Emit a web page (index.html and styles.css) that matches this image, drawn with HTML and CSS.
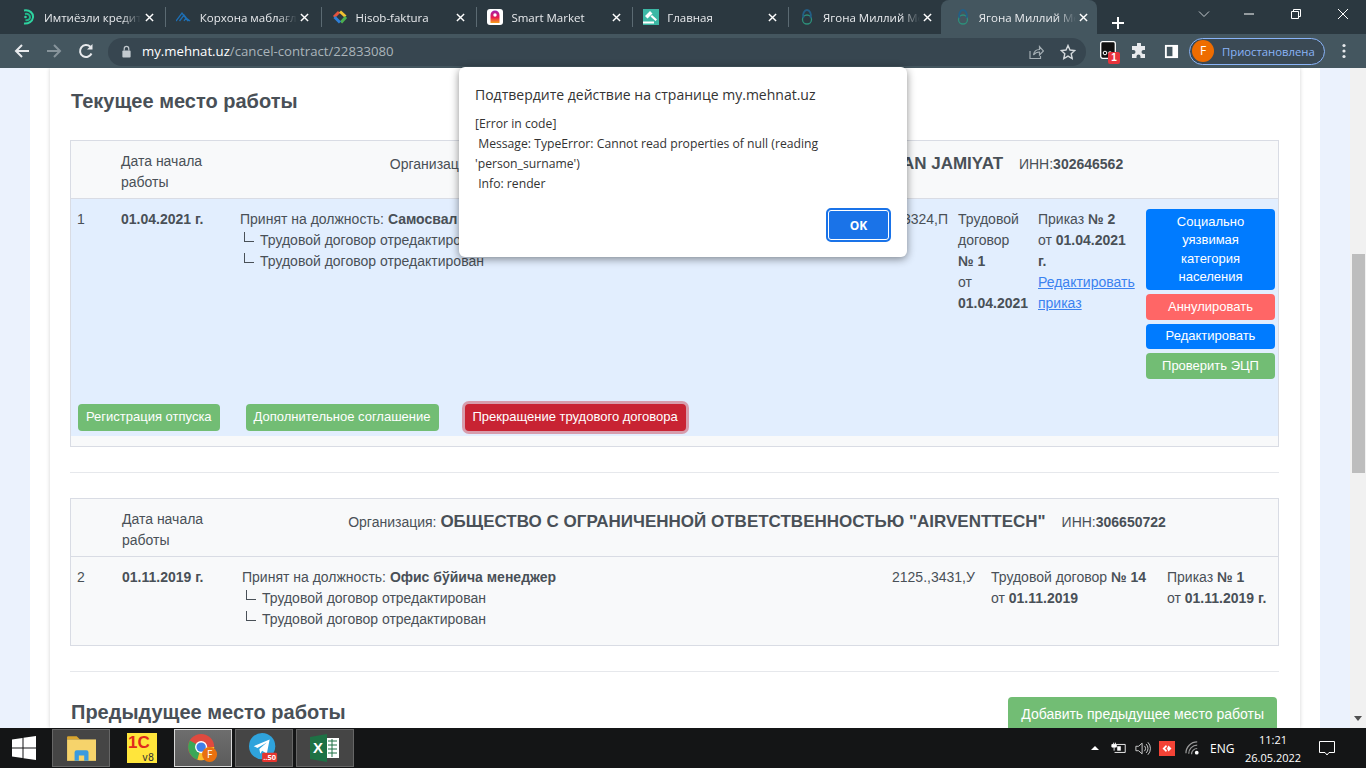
FILE: index.html
```html
<!DOCTYPE html>
<html lang="ru">
<head>
    <meta charset="UTF-8">
    <title>Ягона Миллий Меҳнат Портали</title>
    <link rel="stylesheet" href="styles.css">
</head>
<body>
    <svg class="icon-defs" width="0" height="0">
        <symbol id="tab-x" viewBox="0 0 10 10"><path d="M1 1l8 8M9 1 1 9" stroke="#fff" stroke-width="1.600"/></symbol>
        <symbol id="tab-logo" viewBox="0 0 16 16"><circle cx="8" cy="10.500" r="4.500" fill="none" stroke="#2d8f7a" stroke-width="1.300"/><path d="M4.500 9C3 5 5.500 1 8 1s5 4 3.500 8" fill="none" stroke="#235f86" stroke-width="1.800"/></symbol>
    </svg>

    <header class="tabstrip">
        <div class="tab">
            <svg class="favicon" viewBox="0 0 16 16"><path d="M4 1.500c6-1 9.500 3 9 7-.5 4-4.500 6.500-9 6" fill="none" stroke="#2fd3a0" stroke-width="2"/><path d="M5 5c3-.8 5 1 5 3.200S8 11.500 5.500 11" fill="none" stroke="#1fb88a" stroke-width="2"/><circle cx="5.500" cy="8" r="1.300" fill="#2fd3a0"/></svg>
            <span class="tab-label">Имтиёзли кредит</span><svg class="tab-close"><use href="#tab-x"/></svg>
        </div>
        <div class="tab">
            <svg class="favicon" viewBox="0 0 16 16"><path d="M0 12 6 4l6 8M3.500 12 8 6l4.500 6M8 12l2-3 4 3" fill="none" stroke="#1d6fb5" stroke-width="1.300"/></svg>
            <span class="tab-label">Корхона маблағлари</span><svg class="tab-close"><use href="#tab-x"/></svg>
        </div>
        <div class="tab">
            <svg class="favicon" viewBox="0 0 16 16"><path d="M2 8l5-5" stroke="#e5533d" stroke-width="3"/><path d="M8 2.500l5.500 5" stroke="#f2c230" stroke-width="3"/><path d="M14 8l-5 5.500" stroke="#4caf50" stroke-width="3"/><path d="M8 13.500 2.500 8" stroke="#2f7fd6" stroke-width="3"/><path d="M8 5.500 10.500 8 8 10.500 5.500 8z" fill="#2b3840"/></svg>
            <span class="tab-label">Hisob-faktura</span><svg class="tab-close"><use href="#tab-x"/></svg>
        </div>
        <div class="tab">
            <svg class="favicon" viewBox="0 0 16 16"><defs><linearGradient id="bag" x1="0" y1="0" x2="0" y2="1"><stop offset="0" stop-color="#a31fb0"/><stop offset=".55" stop-color="#e8194f"/><stop offset="1" stop-color="#f7a11a"/></linearGradient></defs><rect width="16" height="16" rx="3" fill="#fff"/><path d="M3.500 14V6a4.500 4.500 0 0 1 9 0v8z" fill="url(#bag)"/><circle cx="8" cy="6" r="1.700" fill="#fff"/></svg>
            <span class="tab-label">Smart Market</span><svg class="tab-close"><use href="#tab-x"/></svg>
        </div>
        <div class="tab">
            <svg class="favicon" viewBox="0 0 16 16"><rect width="16" height="16" fill="#3cb8a5"/><path d="M2 7l5-5 2.500 2.500-5 5zM7.500 7.500l1.500-1.500 5 4.500-1.500 1.500z" fill="#fff"/><rect x="0" y="12.500" width="11" height="2" fill="#fff"/></svg>
            <span class="tab-label">Главная</span><svg class="tab-close"><use href="#tab-x"/></svg>
        </div>
        <div class="tab">
            <svg class="favicon"><use href="#tab-logo"/></svg>
            <span class="tab-label">Ягона Миллий Меҳнат</span><svg class="tab-close"><use href="#tab-x"/></svg>
        </div>
        <div class="tab tab-active">
            <svg class="favicon"><use href="#tab-logo"/></svg>
            <span class="tab-label">Ягона Миллий Меҳнат</span><svg class="tab-close"><use href="#tab-x"/></svg>
        </div>
        <svg class="new-tab" viewBox="0 0 14 14"><path d="M7 1v12M1 7h12" stroke="#fff" stroke-width="2"/></svg>
        <div class="window-controls">
            <svg class="ctl-chevron" viewBox="0 0 12 12"><path d="M1 3.500 6 8.500l5-5" fill="none" stroke="#c4cace"/></svg>
            <svg viewBox="0 0 12 12"><path d="M1 6h10" stroke="#fff"/></svg>
            <svg viewBox="0 0 12 12"><path d="M1.500 3.500h7v7h-7zM3.500 3.500v-2h7v7h-2" fill="none" stroke="#fff"/></svg>
            <svg viewBox="0 0 12 12"><path d="M1 1l10 10M11 1 1 11" stroke="#fff"/></svg>
        </div>
    </header>

    <nav class="toolbar">
        <svg class="tool tool-back" viewBox="0 0 16 16"><path d="M15 8H2M8 2 2 8l6 6" fill="none" stroke="#e8eaed" stroke-width="2"/></svg>
        <svg class="tool tool-forward" viewBox="0 0 16 16"><path d="M1 8h13M8 2l6 6-6 6" fill="none" stroke="#87949b" stroke-width="2"/></svg>
        <svg class="tool tool-reload" viewBox="0 0 16 16"><path d="M13.500 10.500A6 6 0 1 1 12.300 3.800" fill="none" stroke="#e8eaed" stroke-width="2"/><path d="M14.500 1v5.500H9z" fill="#e8eaed"/></svg>
        <div class="omnibox">
            <svg class="lock" viewBox="0 0 12 14"><path d="M3.500 6V4a2.500 2.500 0 0 1 5 0v2" fill="none" stroke="#c3cacf" stroke-width="1.300"/><rect x="1.500" y="6" width="9" height="7.500" rx="1" fill="#c3cacf"/></svg>
            <span class="url"><b>my.mehnat.uz</b>/cancel-contract/22833080</span>
            <svg class="omni-icon omni-share" viewBox="0 0 16 16"><path d="M2 7v7.500h10.500V12" fill="none" stroke="#a4aeb4" stroke-width="1.200"/><path d="M5.500 11c.5-3.500 3-5.500 6-5.500V2.500L15.500 7l-4 4V8c-2.500 0-4.500 1-6 3z" fill="none" stroke="#a4aeb4" stroke-width="1.200"/></svg>
            <svg class="omni-icon omni-star" viewBox="0 0 16 16"><path d="M8 1.500l2 4.500 4.800.5-3.600 3.200 1 4.800L8 12.100l-4.200 2.400 1-4.800L1.200 6.500 6 6z" fill="none" stroke="#d5dadd" stroke-width="1.400"/></svg>
        </div>
        <div class="ext-box">
            <svg class="ext-icon" viewBox="0 0 16 18"><rect x=".7" y=".7" width="14.600" height="16.600" rx="2" fill="#111" stroke="#fff" stroke-width="1.300"/><circle cx="5" cy="12" r="1.800" fill="none" stroke="#fff"/><circle cx="10" cy="12" r="1.800" fill="#fff"/></svg>
            <span class="ext-badge">1</span>
        </div>
        <svg class="tool-puzzle" viewBox="0 0 16 16"><path d="M6 1a2 2 0 0 1 4 0v2h4v4h-1.500a2 2 0 0 0 0 4H14v4H9.500v-1.500a2 2 0 0 0-4 0V15H1v-4h1.500a2 2 0 0 0 0-4H1V3h5z" fill="#e8eaed"/></svg>
        <svg class="tool-panel" viewBox="0 0 16 16"><rect x="1" y="1" width="14" height="14" fill="#fff"/><rect x="3" y="3" width="6" height="10" fill="#44565f"/></svg>
        <div class="profile">
            <span class="avatar">F</span>
            <span class="profile-text">Приостановлена</span>
        </div>
        <svg class="kebab" viewBox="0 0 4 16"><circle cx="2" cy="2.500" r="1.600" fill="#e8eaed"/><circle cx="2" cy="8" r="1.600" fill="#e8eaed"/><circle cx="2" cy="13.500" r="1.600" fill="#e8eaed"/></svg>
    </nav>

    <div class="viewport">
        <main class="page">
            <div class="page-inner">
                <section class="card">
                    <h2 class="section-title">Текущее место работы</h2>

                    <div class="job-box">
                        <div class="job-head">
                            <div class="head-date">Дата начала работы</div>
                            <div class="head-org">
                                Организация: <strong class="org-name org-name-hidden">MAS'ULIYATI CHEKLANGAN JAMIYAT</strong>
                                <span class="org-inn">ИНН:<b>302646562</b></span>
                            </div>
                        </div>
                        <div class="job-current">
                            <div class="job-row job-row-first">
                                <div>1</div>
                                <div><b>01.04.2021 г.</b></div>
                                <div>
                                    Принят на должность: <b>Самосвал</b>
                                    <div class="history"><i class="branch"></i>Трудовой договор отредактирован</div>
                                    <div class="history"><i class="branch"></i>Трудовой договор отредактирован</div>
                                </div>
                                <div class="job-code">3324,П</div>
                                <div class="job-contract">Трудовой договор <b>№&nbsp;1</b><br>от <b>01.04.2021</b></div>
                                <div class="job-order">
                                    Приказ <b>№ 2</b><br>от <b>01.04.2021 г.</b><br>
                                    <a href="#" class="edit-link">Редактировать приказ</a>
                                </div>
                                <div class="side-actions">
                                    <button class="btn btn-blue">Социально уязвимая категория населения</button>
                                    <button class="btn btn-coral">Аннулировать</button>
                                    <button class="btn btn-blue">Редактировать</button>
                                    <button class="btn btn-green">Проверить ЭЦП</button>
                                </div>
                            </div>
                            <div class="job-actions">
                                <button class="btn btn-green btn-wide">Регистрация отпуска</button>
                                <button class="btn btn-green btn-wide">Дополнительное соглашение</button>
                                <button class="btn btn-red btn-wide">Прекращение трудового договора</button>
                            </div>
                        </div>
                        <div class="job-foot"></div>
                    </div>

                    <hr class="divider">

                    <div class="job-box">
                        <div class="job-head job-head-second">
                            <div class="head-date">Дата начала работы</div>
                            <div class="head-org">
                                Организация: <strong class="org-name">ОБЩЕСТВО С ОГРАНИЧЕННОЙ ОТВЕТСТВЕННОСТЬЮ "AIRVENTTECH"</strong>
                                <span class="org-inn">ИНН:<b>306650722</b></span>
                            </div>
                        </div>
                        <div class="job-row job-row-second">
                            <div>2</div>
                            <div><b>01.11.2019 г.</b></div>
                            <div>
                                Принят на должность: <b>Офис бўйича менеджер</b>
                                <div class="history"><i class="branch"></i>Трудовой договор отредактирован</div>
                                <div class="history"><i class="branch"></i>Трудовой договор отредактирован</div>
                            </div>
                            <div>2125.,3431,У</div>
                            <div>Трудовой договор <b>№ 14</b><br>от <b>01.11.2019</b></div>
                            <div>Приказ <b>№ 1</b><br>от <b>01.11.2019 г.</b></div>
                        </div>
                    </div>

                    <hr class="divider">

                    <div class="prev-head">
                        <h2 class="section-title prev-title">Предыдущее место работы</h2>
                        <button class="btn btn-green btn-add">Добавить предыдущее место работы</button>
                    </div>
                </section>
            </div>
        </main>
        <div class="scrollbar">
            <div class="scroll-thumb"></div>
            <div class="scroll-arrow"></div>
        </div>
    </div>

    <footer class="taskbar">
        <svg class="win-logo" viewBox="0 0 24 24"><path d="M0 3.500 10.500 2v9.500H0zM11.500 1.800 24 0v11.500H11.500zM0 12.500h10.500V22L0 20.500zM11.500 12.500H24V24l-12.500-1.800z" fill="#fff"/></svg>
        <div class="task task-open">
            <svg viewBox="0 0 28 26"><path d="M1 3a1 1 0 0 1 1-1h8l3 3H1z" fill="#d9a52e"/><rect x="1" y="5" width="27" height="20" fill="#f6d36b"/><path d="M8 25v-8a2 2 0 0 1 2-2h9a2 2 0 0 1 2 2v8h-4v-5h-5v5z" fill="#3a9be0"/></svg>
        </div>
        <div class="task">
            <svg viewBox="0 0 30 30"><rect width="30" height="30" fill="#ffe53b"/><text x="1" y="15" class="onec-mark">1С</text><text x="15" y="28" class="onec-ver">v8</text></svg>
        </div>
        <div class="task task-active">
            <svg viewBox="0 0 32 32"><circle cx="14" cy="15" r="14" fill="#e04a3f"/><path d="M14 15 2 8a14 14 0 0 0 8 20.400z" fill="#3aa757"/><path d="M14 15l-4 13.400A14 14 0 0 0 28 15z" fill="#fbc02d"/><circle cx="14" cy="15" r="6.500" fill="#fff"/><circle cx="14" cy="15" r="5" fill="#3f7fe8"/><circle cx="23" cy="23" r="8" fill="#e9710f"/><text x="23" y="27" text-anchor="middle" class="chrome-f">F</text></svg>
        </div>
        <div class="task">
            <svg viewBox="0 0 32 32"><circle cx="14" cy="14" r="14" fill="#2fa3dc"/><path d="M5 14 22 7l-3 15-5-3-2 3-1-5 8-7-10 6z" fill="#fff"/><rect x="14" y="21" width="16" height="10" rx="1.500" fill="#e5352f"/><text x="22" y="29" text-anchor="middle" class="tg-count">..50</text></svg>
        </div>
        <div class="task">
            <svg viewBox="0 0 30 28"><rect x="15" y="4" width="14" height="20" fill="#fff"/><path d="M18 7h9M18 11h9M18 15h9M18 19h9M22 5v18" stroke="#1e7145"/><path d="M0 3 17 0v28L0 25z" fill="#1e7145"/><text x="8" y="19" text-anchor="middle" class="xl-mark">X</text></svg>
        </div>
        <div class="tray">
            <svg class="tray-arrow" viewBox="0 0 10 6"><path d="M5 0l5 5H0z" fill="#fff"/></svg>
            <svg class="tray-battery" viewBox="0 0 18 14"><path d="M1 3v3h5V3zM3 1v2M5 1v2M3.500 6v4" stroke="#fff" fill="#fff"/><path d="M6 3h10v9H4" fill="none" stroke="#fff"/><rect x="7" y="5" width="4" height="5" fill="#fff"/></svg>
            <svg class="tray-sound" viewBox="0 0 18 16"><path d="M1 5.500h3L8 2v12L4 10.500H1z" fill="none" stroke="#ddd"/><path d="M10.500 5a4 4 0 0 1 0 6M12.500 3a7 7 0 0 1 0 10M14.500 1a10 10 0 0 1 0 14" fill="none" stroke="#ddd"/></svg>
            <svg class="tray-app" viewBox="0 0 16 15"><rect width="16" height="15" fill="#f44336"/><path d="M7 4 3.500 7.500 7 11l1-1.500L6 7.500l2-2zM9.500 4.500l3 3-3 3-1.500-3z" fill="#fff"/></svg>
            <svg class="tray-wifi" viewBox="0 0 16 16"><path d="M1 13A12 12 0 0 1 13 1M4 13.500A9 9 0 0 1 13 4.500M7 14a6 6 0 0 1 6-6" fill="none" stroke="#9a9a9a" stroke-width="1.300"/><circle cx="12.500" cy="12.500" r="2" fill="#fff"/></svg>
            <span class="tray-lang">ENG</span>
            <div class="tray-clock"><span>11:21</span><span>26.05.2022</span></div>
            <svg class="tray-notes" viewBox="0 0 16 15"><path d="M.5.500h15v11H10L8 14l-2-2.500H.5z" fill="none" stroke="#fff"/></svg>
        </div>
    </footer>

    <div class="dialog">
        <div class="dialog-title">Подтвердите действие на странице my.mehnat.uz</div>
        <div class="dialog-text">[Error in code]<br>&nbsp;Message: TypeError: Cannot read properties of null (reading<br>'person_surname')<br>&nbsp;Info: render</div>
        <div class="dialog-actions"><button class="dialog-ok">OK</button></div>
    </div>
</body>
</html>
```

FILE: styles.css
```css
* {
    box-sizing: border-box;
}

html, body {
    margin: 0;
    height: 100%;
}

body {
    width: 1366px;
    height: 768px;
    overflow: hidden;
    display: flex;
    flex-direction: column;
    position: relative;
    font-family: 'Liberation Sans', Arial, sans-serif;
    font-size: 14px;
    line-height: 21px;
    color: #495057;
    background: #fff;
}

.icon-defs {
    position: absolute;
}

/* browser tabs */
.tabstrip {
    flex: 0 0 34px;
    display: flex;
    background: #2b3840;
    padding-left: 10px;
    font-family: 'Open Sans', sans-serif;
    font-size: 11.500px;
    color: #e8eaed;
}

.tab {
    flex: none;
    width: 155.800px;
    height: 34px;
    display: flex;
    align-items: center;
    padding-left: 10px;
    position: relative;
}

/* separators sit between tabs, not full height */
.tab::after {
    content: "";
    position: absolute;
    right: 0;
    top: 7px;
    height: 20px;
    border-right: 1px solid #5b6a72;
}

.tab:nth-child(6)::after, .tab-active::after {
    display: none;
}

.tab-active {
    width: 156px;
    margin-left: -4px;
    padding-left: 14px;
    background: #44565f;
    border-radius: 8px 8px 0 0;
}

.favicon {
    flex: none;
    width: 16px;
    height: 16px;
    margin-right: 8px;
}

.tab-label {
    width: 97px;
    overflow: hidden;
    white-space: nowrap;
    -webkit-mask-image: linear-gradient(90deg, #000 80%, transparent);
    mask-image: linear-gradient(90deg, #000 80%, transparent);
}

.tab-close {
    flex: none;
    width: 9px;
    height: 9px;
    margin-left: 3.500px;
}

.new-tab {
    flex: none;
    width: 14px;
    height: 14px;
    margin: 16px 0 0 14px;
}

.window-controls {
    margin-left: auto;
    display: flex;
    padding-top: 8px;
    padding-right: 17px;
    gap: 35px;
}

.window-controls svg {
    width: 12px;
    height: 12px;
}

.ctl-chevron {
    margin-right: -2px;
}

/* toolbar */
.toolbar {
    flex: 0 0 34px;
    display: flex;
    align-items: center;
    background: #44565f;
    padding-left: 14px;
}

.tool {
    width: 16px;
    height: 16px;
    margin-right: 16px;
}

.tool-reload {
    margin-right: 14px;
}

.omnibox {
    width: 978px;
    height: 28px;
    margin-top: 1px;
    display: flex;
    align-items: center;
    background: #374650;
    border-radius: 14px;
    padding-left: 13px;
    font-family: 'Open Sans', sans-serif;
    font-size: 13.200px;
    color: #aab4ba;
}

.lock {
    width: 11px;
    height: 13px;
    margin-right: 10px;
}

.url b {
    font-weight: 400;
    color: #fff;
}

.omni-icon {
    width: 16px;
    height: 16px;
}

.omni-share {
    margin-left: auto;
}

.omni-star {
    margin: 0 10px 0 16px;
}

.ext-box {
    position: relative;
    width: 16px;
    height: 20px;
    margin-left: 14px;
}

.ext-icon {
    width: 16px;
    height: 18px;
    display: block;
}

.ext-badge {
    position: absolute;
    left: 8px;
    top: 11px;
    width: 12px;
    height: 12px;
    border-radius: 2px;
    background: #e8333c;
    color: #fff;
    font-size: 10px;
    font-weight: 700;
    line-height: 12px;
    text-align: center;
}

.tool-puzzle {
    width: 16px;
    height: 16px;
    margin-left: 15px;
}

.tool-panel {
    width: 15px;
    height: 15px;
    margin-left: 17px;
}

.profile {
    width: 136px;
    height: 27px;
    margin-left: 10px;
    display: flex;
    align-items: center;
    border: 1px solid #8ab4f8;
    border-radius: 14px;
    padding-left: 2px;
    background: #3a4954;
    font-family: 'Open Sans', sans-serif;
    font-size: 11.300px;
    color: #8ab4f8;
}

.avatar {
    width: 22px;
    height: 22px;
    border-radius: 50%;
    background: #ee6c00;
    color: #fff;
    font-size: 12px;
    text-align: center;
    line-height: 22px;
    margin-right: 8px;
}

.profile-text {
    white-space: nowrap;
}

.kebab {
    width: 4px;
    height: 16px;
    margin-left: 17px;
}

/* page */
.viewport {
    flex: 0 0 660px;
    display: flex;
    overflow: hidden;
}

.page {
    width: 1350px;
    padding: 0 30px;
    background: #ebf2fd;
}

.page-inner {
    padding: 0 20px;
    background: #fff;
    height: 100%;
}

.card {
    height: 100%;
    padding: 21px 21px 0 20px;
    background: #fff;
    box-shadow: 0 0 4px rgba(0, 0, 0, 0.18);
}

.section-title {
    margin: 0 0 27px;
    padding-left: 1px;
    font-size: 20px;
    line-height: 24px;
    font-weight: 700;
}

.job-box {
    border: 1px solid #d9dce4;
    background: #f8f9fa;
}

.job-head {
    height: 58px;
    display: flex;
    border-bottom: 1px solid #d9dce4;
    padding: 10px 5px 0 50px;
}

.job-head-second {
    padding-left: 51px;
}

.head-date {
    flex: none;
    width: 119px;
    padding-right: 30px;
}

.head-org {
    flex: 1;
    padding-top: 1px;
    line-height: 24px;
    text-align: center;
    white-space: nowrap;
}

.org-name {
    font-size: 17px;
}

.org-name-hidden {
    display: inline-block;
    width: 521px;
    text-align: right;
}

.org-inn {
    margin-left: 12px;
}

.job-current {
    background: #e2eefe;
    padding-top: 10px;
}

.job-row {
    display: grid;
    padding-left: 6px;
}

.job-row-first {
    height: 171px;
    grid-template-columns: 44px 119px 618px 100px 80px 108px 129px;
}

.job-row-second {
    height: 88px;
    padding-top: 10px;
    grid-template-columns: 45px 120px 650px 99px 176px 108px;
}

.job-code {
    text-align: right;
    padding-right: 10px;
}

.job-contract {
    padding-right: 8px;
}

.job-order {
    padding-right: 12px;
}

.history {
    padding-left: 4px;
}

.branch {
    display: inline-block;
    width: 10px;
    height: 10px;
    margin-right: 6px;
    border-left: 1px solid #495057;
    border-bottom: 1px solid #495057;
    vertical-align: 3px;
    margin-top: -3px;
}

.edit-link {
    color: #3b82f0;
}

.side-actions {
    display: flex;
    flex-direction: column;
    gap: 4px;
}

.btn {
    border: none;
    border-radius: 4px;
    color: #fff;
    font-family: inherit;
    font-size: 13px;
    line-height: 18.500px;
    padding: 3.500px 8px;
}

.btn-blue {
    background: #007bff;
}

.btn-coral {
    background: #ff6666;
}

.btn-green {
    background: #72bd74;
}

.btn-red {
    background: #c82333;
    box-shadow: 0 0 0 3px rgba(200, 35, 51, 0.4);
}

.job-actions {
    display: flex;
    gap: 26px;
    padding: 24px 0 5px 7px;
}

.btn-wide {
    height: 27px;
    padding: 4px 8px;
    white-space: nowrap;
}

.job-foot {
    height: 10px;
}

.divider {
    margin: 25px 0;
    border: none;
    border-top: 1px solid #e6e8ec;
}

.prev-head {
    display: flex;
    justify-content: space-between;
    align-items: flex-start;
}

.prev-title {
    margin: 3px 0 0;
}

.btn-add {
    flex: none;
    margin-right: 2px;
    height: 34px;
    padding: 6px 13px;
    font-size: 14px;
    line-height: 21px;
}

.scrollbar {
    width: 16px;
    background: #f1f1f1;
    display: flex;
    flex-direction: column;
    align-items: center;
}

.scroll-thumb {
    width: 13px;
    height: 219px;
    margin-top: 186px;
    background: #bdbdbd;
}

.scroll-arrow {
    margin-top: auto;
    margin-bottom: 7px;
    border-left: 4px solid transparent;
    border-right: 4px solid transparent;
    border-top: 5px solid #505050;
}

/* windows taskbar */
.taskbar {
    flex: 0 0 40px;
    display: flex;
    align-items: center;
    background: #141516;
    padding-left: 12px;
    color: #fff;
}

.win-logo {
    width: 24px;
    height: 24px;
    margin-right: 16px;
}

.task {
    width: 58px;
    height: 38px;
    margin-right: 3px;
    display: flex;
    align-items: center;
    justify-content: center;
    border: 1px solid transparent;
}

.task svg {
    width: 30px;
    height: 30px;
}

.task:nth-of-type(n+4), .task-open {
    background: #454545;
    border-color: #666;
}

.task-active {
    background: linear-gradient(#6e6e6e, #5c5c5c);
    border-color: #d8d8d8;
}

.onec-mark {
    font: 700 17px 'Liberation Sans', sans-serif;
    fill: #e02a1c;
}

.onec-ver {
    font: 400 10px 'DejaVu Sans Mono', monospace;
    fill: #333;
}

.chrome-f, .tg-count {
    font: 400 11px 'Open Sans', sans-serif;
    fill: #fff;
}

.tg-count {
    font-size: 8px;
    font-weight: 700;
}

.xl-mark {
    font: 700 15px 'Liberation Sans', sans-serif;
    fill: #fff;
}

.tray {
    margin-left: auto;
    display: flex;
    align-items: center;
    font-family: 'Open Sans', sans-serif;
    font-size: 12px;
}

.tray-arrow {
    width: 8px;
    height: 5px;
}

.tray-battery {
    width: 16px;
    height: 14px;
    margin-left: 12px;
}

.tray-sound {
    width: 16px;
    height: 15px;
    margin-left: 8px;
}

.tray-app {
    width: 16px;
    height: 15px;
    margin-left: 8px;
}

.tray-wifi {
    width: 15px;
    height: 15px;
    margin-left: 10px;
}

.tray-lang {
    width: 24px;
    margin-left: 10px;
    white-space: nowrap;
}

.tray-clock {
    width: 64px;
    margin-left: 7px;
    padding-top: 2px;
    display: flex;
    flex-direction: column;
    align-items: center;
    font-size: 11px;
    line-height: 18px;
}

.tray-notes {
    width: 16px;
    height: 15px;
    margin: 0 31px 0 14px;
}

/* alert on top of everything */
.dialog {
    position: absolute;
    left: 459px;
    top: 67px;
    width: 448px;
    height: 190px;
    padding: 16px;
    background: #fff;
    border-radius: 6px;
    box-shadow: 0 2px 8px rgba(0, 0, 0, 0.45);
    font-family: 'Open Sans', sans-serif;
    color: #333;
}

.dialog-title {
    font-size: 14px;
    line-height: 24px;
    white-space: nowrap;
}

.dialog-text {
    margin-top: 7px;
    font-size: 12.200px;
    line-height: 20px;
    white-space: nowrap;
}

.dialog-actions {
    display: flex;
    justify-content: flex-end;
    margin-top: 14px;
}

.dialog-ok {
    width: 65px;
    height: 34px;
    border: 2px solid #1a73e8;
    outline: 1px solid #fff;
    outline-offset: -3px;
    border-radius: 5px;
    background: #1a73e8;
    color: #fff;
    font-family: inherit;
    font-size: 12px;
    font-weight: 700;
}
```
